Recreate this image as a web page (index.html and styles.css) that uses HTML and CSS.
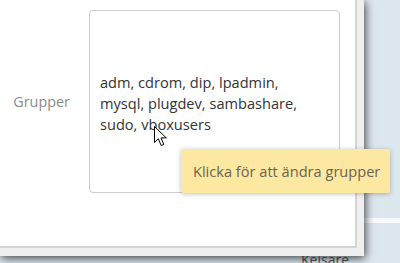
FILE: index.html
```html
<!DOCTYPE html>
<html lang="sv">
<head>
  <meta charset="UTF-8" />
  <title>Grupper</title>
  <link rel="stylesheet" href="styles.css">
</head>
<body>
  <div class="desk">
    <div class="desk-band"></div>
    <span class="desk-label">Keisare</span>

    <div class="window">
      <div class="panel">
        <div class="field-row">
          <label class="field-label">Grupper</label>
          <div class="groups-box">
            <p class="groups-text">adm, cdrom, dip, lpadmin, mysql, plugdev, sambashare, sudo, vboxusers</p>
          </div>
        </div>
      </div>
    </div>

    <div class="tooltip">Klicka för att ändra grupper</div>

    <svg class="cursor" width="14" height="21" viewBox="0 0 14 21">
      <path d="M0.5 0.5 L0.5 16.5 L4.3 12.8 L7.2 19.5 L9.8 18.4 L7 11.9 L12.3 11.9 Z" fill="#fff" stroke="#000" stroke-width="1" stroke-linejoin="miter"/>
    </svg>
  </div>
</body>
</html>
```

FILE: styles.css
```css
body {
  margin: 0;
  font-family: 'Open Sans', 'Noto Sans', sans-serif;
  background: #dfe8ef;
}
.desk {
  position: relative;
  width: 400px;
  height: 263px;
  overflow: hidden;
  background: #dde7ee;
}
.desk-band {
  position: absolute;
  left: 0;
  top: 218px;
  width: 400px;
  height: 5px;
  background: #f7f9fb;
}
.desk-label {
  position: absolute;
  left: 301px;
  top: 250px;
  font-size: 14px;
  color: #555;
}
.window {
  position: relative;
  width: 364px;
  height: 256px;
  background: #efefef;
  box-shadow: 1px 2px 9px rgba(0, 0, 0, 0.75);
}
.panel {
  box-sizing: border-box;
  width: 357px;
  height: 248px;
  padding-top: 10px;
  background: #fff;
  border-right: 2px solid #d4d4d4;
  border-bottom: 2px solid #d4d4d4;
}
.field-row {
  display: flex;
  align-items: center;
  gap: 19px;
}
.field-label {
  width: 70px;
  text-align: right;
  font-size: 14.4px;
  color: #8c8c8c;
}
.groups-box {
  width: 218px;
  height: 181px;
  padding: 0 21px 0 10px;
  border: 1px solid #cccccc;
  border-radius: 4px;
  display: flex;
  align-items: center;
}
.groups-text {
  margin: 0;
  padding-top: 3px;
  font-size: 14.6px;
  line-height: 21px;
  color: #333;
}
.tooltip {
  position: absolute;
  left: 181px;
  top: 149px;
  height: 44px;
  padding: 0 10px 0 12px;
  line-height: 44px;
  background: #fde8a1;
  color: #6b6350;
  font-size: 14.6px;
  white-space: nowrap;
  border-radius: 2px;
  box-shadow: 0 1px 5px rgba(0, 0, 0, 0.25);
}
.cursor {
  position: absolute;
  left: 154px;
  top: 126px;
}
```
